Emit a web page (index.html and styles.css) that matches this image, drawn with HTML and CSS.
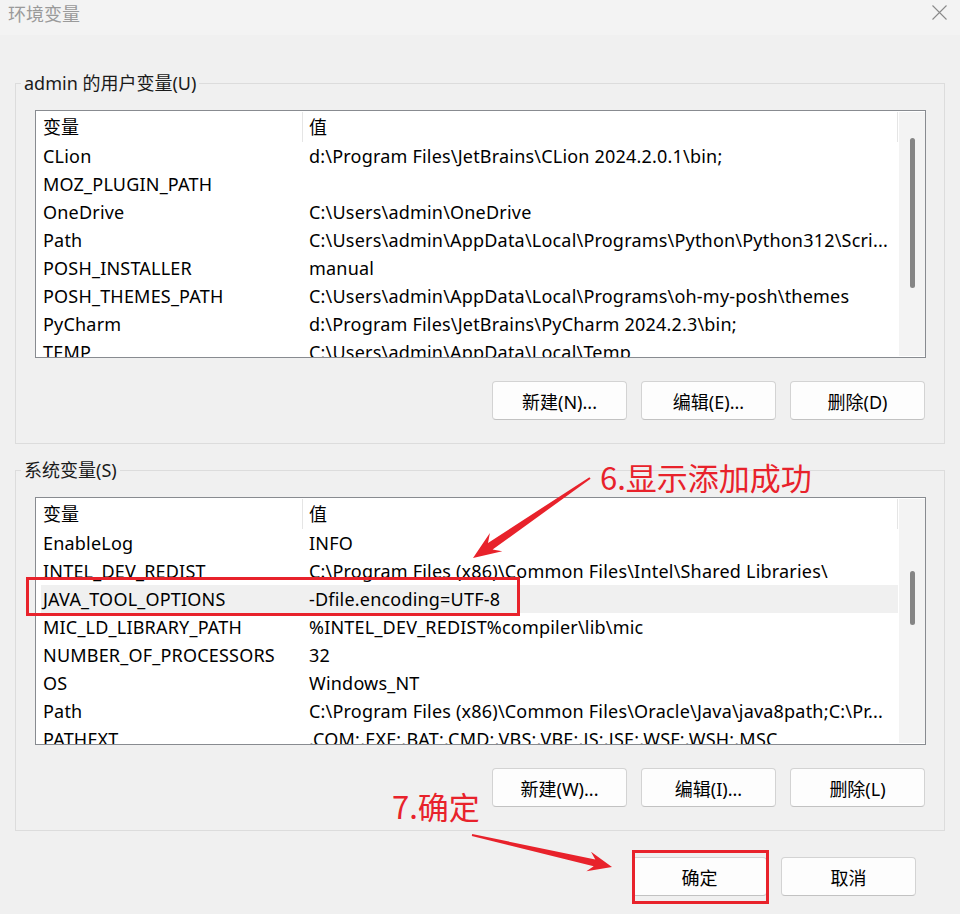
FILE: index.html
```html
<!DOCTYPE html>
<html lang="zh-CN">
<head>
    <meta charset="UTF-8">
    <title>环境变量</title>
    <link rel="stylesheet" href="styles.css">
</head>
<body>
    <div class="titlebar">
        <span class="title">环境变量</span>
        <svg class="close" viewBox="0 0 15 15"><path d="M0.5 0.5 L14.5 14.5 M14.5 0.5 L0.5 14.5" stroke="#8a8a8a" stroke-width="1.1" fill="none"/></svg>
    </div>

    <fieldset class="group">
        <legend>admin 的用户变量(U)</legend>
        <div class="list">
            <div class="list-body">
                <div class="row head"><div class="c1">变量</div><div class="c2">值</div></div>
                <div class="row"><div class="c1">CLion</div><div class="c2">d:\Program Files\JetBrains\CLion 2024.2.0.1\bin;</div></div>
                <div class="row"><div class="c1">MOZ_PLUGIN_PATH</div><div class="c2"></div></div>
                <div class="row"><div class="c1">OneDrive</div><div class="c2">C:\Users\admin\OneDrive</div></div>
                <div class="row"><div class="c1">Path</div><div class="c2">C:\Users\admin\AppData\Local\Programs\Python\Python312\Scri...</div></div>
                <div class="row"><div class="c1">POSH_INSTALLER</div><div class="c2">manual</div></div>
                <div class="row"><div class="c1">POSH_THEMES_PATH</div><div class="c2">C:\Users\admin\AppData\Local\Programs\oh-my-posh\themes</div></div>
                <div class="row"><div class="c1">PyCharm</div><div class="c2">d:\Program Files\JetBrains\PyCharm 2024.2.3\bin;</div></div>
                <div class="row"><div class="c1">TEMP</div><div class="c2">C:\Users\admin\AppData\Local\Temp</div></div>
            </div>
            <div class="track"><div class="thumb thumb-user"></div></div>
        </div>
        <div class="btn-row">
            <button class="btn">新建(N)...</button>
            <button class="btn">编辑(E)...</button>
            <button class="btn">删除(D)</button>
        </div>
    </fieldset>

    <fieldset class="group group-sys">
        <legend>系统变量(S)</legend>
        <div class="list">
            <div class="list-body">
                <div class="row head"><div class="c1">变量</div><div class="c2">值</div></div>
                <div class="row"><div class="c1">EnableLog</div><div class="c2">INFO</div></div>
                <div class="row"><div class="c1">INTEL_DEV_REDIST</div><div class="c2">C:\Program Files (x86)\Common Files\Intel\Shared Libraries\</div></div>
                <div class="row selected"><div class="c1">JAVA_TOOL_OPTIONS</div><div class="c2">-Dfile.encoding=UTF-8</div></div>
                <div class="row"><div class="c1">MIC_LD_LIBRARY_PATH</div><div class="c2">%INTEL_DEV_REDIST%compiler\lib\mic</div></div>
                <div class="row"><div class="c1">NUMBER_OF_PROCESSORS</div><div class="c2">32</div></div>
                <div class="row"><div class="c1">OS</div><div class="c2">Windows_NT</div></div>
                <div class="row"><div class="c1">Path</div><div class="c2">C:\Program Files (x86)\Common Files\Oracle\Java\java8path;C:\Pr...</div></div>
                <div class="row"><div class="c1">PATHEXT</div><div class="c2">.COM;.EXE;.BAT;.CMD;.VBS;.VBE;.JS;.JSE;.WSF;.WSH;.MSC</div></div>
            </div>
            <div class="track"><div class="thumb thumb-sys"></div></div>
        </div>
        <div class="btn-row">
            <button class="btn">新建(W)...</button>
            <button class="btn">编辑(I)...</button>
            <button class="btn">删除(L)</button>
        </div>
    </fieldset>

    <div class="footer">
        <button class="btn">确定</button>
        <button class="btn">取消</button>
    </div>

    <!-- annotations drawn over the dialog -->
    <div class="mark mark-row"></div>
    <div class="mark mark-ok"></div>
    <div class="note note-6">6.显示添加成功</div>
    <div class="note note-7">7.确定</div>
    <svg class="arrows" viewBox="0 0 960 914">
        <polygon fill="#e8222b" points="473,558 502.3,551.3 492.6,549.5 590.6,478.8 589.4,477.2 488,542.9 489.9,533.1"/>
        <polygon fill="#e8222b" points="612,867 586.4,871.2 593.7,866.3 471.8,836 472.2,834 595.3,859.5 591,851.8"/>
    </svg>
</body>
</html>
```

FILE: styles.css
```css
body{
    margin: 0;
    width: 960px;
    height: 914px;
    position: relative;
    overflow: hidden;
    background: #f0f0f0;
    font-family: "Noto Sans", "Noto Sans CJK SC", sans-serif;
    font-size: 18px;
    color: #000;
}

.titlebar{
    height: 35px;
    background: #f3f3f3;
    display: flex;
    justify-content: space-between;
    align-items: flex-start;
}

.title{
    color: #9a9a9a;
    line-height: 26px;
    padding-left: 8px;
    font-family: "Noto Sans CJK SC", sans-serif;
}

.close{
    width: 15px;
    height: 15px;
    margin: 5px 13px 0 0;
}

.group{
    margin: 36px 15px 0;
    padding: 0 18px 23px 5px;
    border: 1px solid #dcdcdc;
}

.group-sys{
    margin-top: 14px;
}

.group legend{
    padding: 0 3px;
    line-height: 24px;
    color: #1a1a1a;
}

.list{
    margin: 15px 0 0 14px;
    height: 248px;
    box-sizing: border-box;
    border: 1px solid #888b90;
    background: #fff;
    display: flex;
}

.list-body{
    flex: 1;
    padding: 1px 1px 0 5px;
    overflow: hidden;
}

.row{
    display: flex;
    height: 28px;
    line-height: 28px;
    white-space: nowrap;
    letter-spacing: 0.2px;
}

.row.head{
    height: 30px;
    line-height: 30px;
    letter-spacing: 0;
}

.row.selected{
    background: #f0f0f0;
}

.c1{
    width: 262px;
    flex: none;
    box-sizing: border-box;
    padding-left: 2px;
    overflow: hidden;
}

.c2{
    flex: 1;
    padding-left: 6px;
    overflow: hidden;
}

.head .c1,
.head .c2{
    border-right: 1px solid #e5e5e5;
}

.track{
    width: 26px;
    margin: 1px 0;
    background: #f3f3f3;
}

.thumb{
    width: 5px;
    margin: 0 auto;
    border-radius: 3px;
    background: #858585;
}

.thumb-user{
    margin-top: 26px;
    height: 150px;
}

.thumb-sys{
    margin-top: 72px;
    height: 54px;
}

.btn-row{
    display: flex;
    justify-content: flex-end;
    gap: 14px;
    margin: 23px 1px 0 0;
}

.btn{
    width: 135px;
    height: 39px;
    box-sizing: border-box;
    border: 1px solid #d3d3d3;
    border-bottom-color: #c2c2c2;
    border-radius: 4px;
    background: #fdfdfd;
    font-family: "Noto Sans", "Noto Sans CJK SC", sans-serif;
    font-size: 18px;
    color: #000;
    padding: 0;
}

.footer{
    display: flex;
    justify-content: flex-end;
    gap: 14px;
    margin: 26px 44px 0 0;
}

.mark{
    position: absolute;
    box-sizing: border-box;
    border: 3px solid #e8222b;
}

.mark-row{
    left: 26px;
    top: 577px;
    width: 494px;
    height: 39px;
}

.mark-ok{
    left: 632px;
    top: 850px;
    width: 137px;
    height: 54px;
}

.note{
    position: absolute;
    color: #e8222b;
    font-family: "Noto Sans CJK SC", sans-serif;
    font-size: 31px;
    line-height: 31px;
    white-space: nowrap;
}

.note-6{
    left: 600px;
    top: 461px;
}

.note-7{
    left: 392px;
    top: 790px;
}

.arrows{
    position: absolute;
    left: 0;
    top: 0;
    width: 960px;
    height: 914px;
    pointer-events: none;
}
```
